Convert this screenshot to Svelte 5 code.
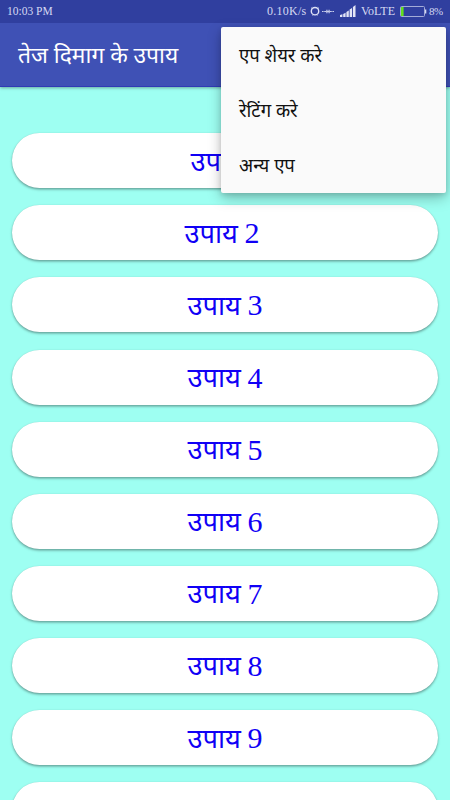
<script>
  const tips = [1, 2, 3, 4, 5, 6, 7, 8, 9, 10];
  const menu = ['एप शेयर करे', 'रेटिंग करे', 'अन्य एप'];
</script>

<div class="screen">
  <header>
    <div class="status">
      <span class="time">10:03 PM</span>
      <div class="indicators">
        <span class="speed">0.10K/s</span>
        <svg class="alarm" width="10" height="11" viewBox="0 0 10 11">
          <circle cx="5" cy="5.2" r="3.7" fill="none" stroke="#dfe2f6" stroke-width="1.4" />
          <path d="M1.1 2.4 2.2 1.4M8.9 2.4 7.8 1.4M2.6 9.4l.5-.8M7.4 9.4l-.5-.8" stroke="#d5d9f2" stroke-width="1" />
        </svg>
        <svg class="dots" width="12" height="7" viewBox="0 0 12 7">
          <path d="M0 3.5h1.6M2.2 3.5h2M4.5 3.5h3M7.8 3.5h2M10.4 3.5H12M4.9 1.8v3.4M7.1 1.8v3.4" stroke="#c9ceec" stroke-width="1.2" />
        </svg>
        <svg class="signal" width="16" height="12" viewBox="0 0 16 12">
          <path d="M0 12v-2l2.4-.8V12zM3.2 12V9l2.4-1.2V12zM6.4 12V7l2.4-1.4V12zM9.6 12V4.6L12 3v9zM12.9 12V2l2.6-2v12z" fill="#e3e5f6" />
        </svg>
        <span class="volte">VoLTE</span>
        <svg class="battery" width="27" height="11" viewBox="0 0 27 11">
          <rect x=".5" y=".5" width="24" height="10" rx="1" fill="none" stroke="#a3abd8" />
          <rect x="1" y="1" width="2.6" height="9" fill="#62e01c" />
          <path d="M25 3.5h1.3v4H25z" fill="#d5d9f2" />
        </svg>
        <span class="percent">8%</span>
      </div>
    </div>
    <div class="toolbar"><h1>तेज दिमाग के उपाय</h1></div>
  </header>

  <main>
    {#each tips as n}
      <button class:first={n === 1} class:second={n === 2} class:last={n === 10}><span class="word">उपाय</span><span class="num">{n}</span></button>
    {/each}
  </main>

  <nav>
    {#each menu as item}
      <a href="#menu"><span>{item}</span></a>
    {/each}
  </nav>
</div>

<style>
  :global(body) { margin: 0; overflow: hidden; }
  .screen {
    position: relative;
    width: 450px;
    height: 800px;
    overflow: hidden;
    background: #9efff2;
    font-family: "Noto Sans", "Noto Sans Devanagari", sans-serif;
  }
  header {
    position: relative;
    height: 87px;
    box-sizing: border-box;
    background: #3f51b5;
    border-bottom: 1px solid #303ab5;
    box-shadow: 0 1px 3px rgba(0, 0, 0, .35);
  }
  .status {
    display: flex;
    justify-content: space-between;
    align-items: center;
    height: 23px;
    box-sizing: border-box;
    padding: 0 7px 0 7px;
    background: #303f9f;
    color: #d5d9f2;
    font: 12px/23px "Liberation Serif", serif;
    white-space: nowrap;
  }
  .time { width: 46px; font-size: 11.5px; }
  .indicators { display: flex; align-items: center; }
  .speed { width: 43px; letter-spacing: .25px; }
  .dots { margin-left: 2px; }
  .signal { margin: 0 0 2px 6px; }
  .volte { width: 34px; margin-left: 5px; }
  .battery { margin-left: 5px; }
  .percent { width: 14px; margin-left: 2px; font-size: 11px; letter-spacing: -.6px; }
  .toolbar { display: flex; align-items: center; height: 63px; padding-left: 18px; }
  h1 { margin: 0; color: #fff; font-size: 22.8px; font-weight: 400; line-height: 36px; white-space: nowrap; }
  main { display: flex; flex-direction: column; gap: 17.1px; padding: 46.3px 12px 0; }
  button {
    display: flex;
    flex: none;
    justify-content: center;
    align-items: center;
    gap: 6.5px;
    height: 55px;
    padding: 1px 0 0;
    border: 0;
    border-radius: 28px;
    background: #fff;
    color: #1000f5;
    font: 27.3px/40px "Noto Sans", "Noto Sans Devanagari", sans-serif;
    box-shadow: 0 1.5px 2.5px rgba(0, 0, 0, .36), 0 0 1px rgba(0, 0, 0, .12);
  }
  button.first { padding-left: 6px; }
  button.second { padding-right: 6px; }
  button.last { padding-top: 0; }
  .word { margin-top: -1px; }
  .last .word { margin-top: 2px; }
  .last .num { margin-top: -1px; }
  .num { font-family: "Liberation Serif", serif; font-size: 30px; }
  nav {
    position: absolute;
    left: 221px;
    top: 27px;
    width: 225px;
    height: 166px;
    border-radius: 2px;
    background: #fafafa;
    box-shadow: 0 5px 14px rgba(0, 0, 0, .26), 0 2px 5px rgba(0, 0, 0, .12);
  }
  nav a {
    display: flex;
    align-items: center;
    height: 55.2px;
    padding-left: 18px;
    color: #111;
    font-size: 18.5px;
    line-height: 30px;
    text-decoration: none;
    white-space: nowrap;
  }
</style>
